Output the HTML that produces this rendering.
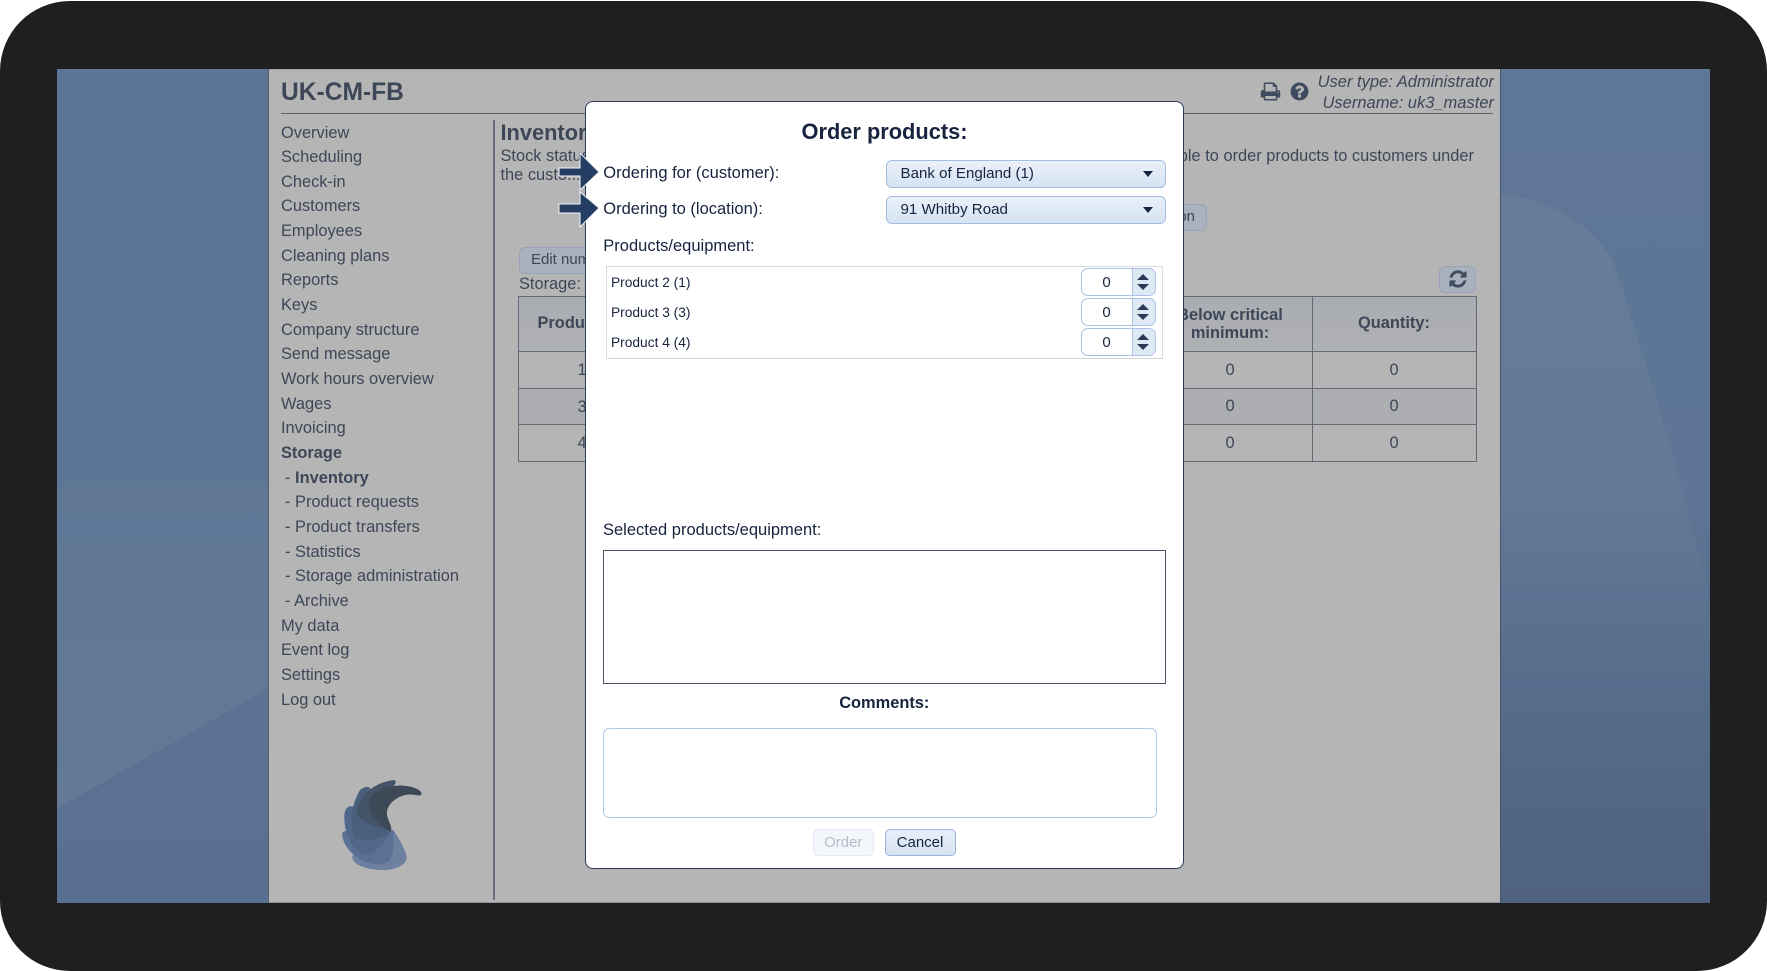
<!DOCTYPE html>
<html lang="en">
<head>
<meta charset="utf-8">
<title>Order products</title>
<style>
html,body{margin:0;padding:0;background:#fff;}
body{width:1767px;height:971px;overflow:hidden;position:relative;font-family:"Liberation Sans",sans-serif;}
div,span{box-sizing:border-box;}
.a{position:absolute;}
.t{position:absolute;white-space:nowrap;line-height:20px;height:20px;font-size:16.4px;color:#3d4757;}
.m{color:#17233f;font-size:16.5px;}
.c{transform:translateX(-50%);}
.b{font-weight:bold;}
.nav{position:absolute;left:281px;top:120.5px;font-size:16.4px;line-height:24.67px;color:#3d4757;white-space:nowrap;}
.nav div{height:24.67px;}
.nav .s{padding-left:4px;}
.sel{position:absolute;left:886px;width:279.5px;height:28px;border:1.5px solid #a3bde0;border-radius:6px;background:linear-gradient(#eaf1f9,#d5e3f3);font-size:15.1px;line-height:25px;padding-left:13.5px;color:#17233f;white-space:nowrap;}
.sel i{position:absolute;right:12px;top:10px;width:0;height:0;border-left:5.5px solid transparent;border-right:5.5px solid transparent;border-top:6px solid #17233f;}
.spin{position:absolute;left:1080.5px;width:75.5px;height:28px;border:1.5px solid #a9c1e3;border-radius:7px;background:#fff;overflow:hidden;}
.spin b{position:absolute;left:0;width:50px;top:1px;height:25px;text-align:center;font-weight:normal;font-size:15px;line-height:25px;color:#17233f;}
.spin u{position:absolute;left:50px;right:0;top:0;bottom:0;border-left:1.5px solid #a9c1e3;background:#dfe9f5;text-decoration:none;}
.spin u:before,.spin u:after{content:"";position:absolute;left:4.5px;border-left:6px solid transparent;border-right:6px solid transparent;}
.spin u:before{top:5px;border-bottom:6px solid #2a3a55;}
.spin u:after{top:15px;border-top:6px solid #2a3a55;}
.row{position:absolute;font-size:13.75px;line-height:16px;left:611px;color:#17233f;white-space:nowrap;}
.btn{position:absolute;background:#a9b1bd;border:1.5px solid #97a3b6;border-radius:6px;}
</style>
</head>
<body>
<!-- dark frame -->
<div class="a" style="left:0;top:1px;width:1767px;height:970px;background:#201f20;border-radius:70px;"></div>

<!-- blue wallpaper -->
<svg class="a" style="left:57px;top:69px;" width="1653" height="834" viewBox="57 69 1653 834">
  <defs>
    <linearGradient id="g1" gradientUnits="userSpaceOnUse" x1="0" y1="69" x2="0" y2="810">
      <stop offset="0" stop-color="#5e7695"/>
      <stop offset="0.5" stop-color="#5e7695"/>
      <stop offset="1" stop-color="#637997"/>
    </linearGradient>
    <linearGradient id="g1b" gradientUnits="userSpaceOnUse" x1="0" y1="690" x2="0" y2="903">
      <stop offset="0" stop-color="#5c7292"/>
      <stop offset="1" stop-color="#5a7090"/>
    </linearGradient>
    <linearGradient id="g2" gradientUnits="userSpaceOnUse" x1="0" y1="69" x2="0" y2="903">
      <stop offset="0" stop-color="#5f7796"/>
      <stop offset="0.5" stop-color="#5e7595"/>
      <stop offset="0.75" stop-color="#566c8b"/>
      <stop offset="1" stop-color="#4f627f"/>
    </linearGradient>
    <linearGradient id="g3" gradientUnits="userSpaceOnUse" x1="0" y1="193" x2="0" y2="700">
      <stop offset="0" stop-color="#fff" stop-opacity="0.045"/>
      <stop offset="0.6" stop-color="#fff" stop-opacity="0.03"/>
      <stop offset="1" stop-color="#fff" stop-opacity="0"/>
    </linearGradient>
  </defs>
  <rect x="57" y="69" width="300" height="834" fill="url(#g1)"/>
  <path d="M57 808L269 687L269 903L57 903Z" fill="url(#g1b)"/>
  <path d="M57 808L269 687" stroke="#667d9b" stroke-width="1" opacity=".7" fill="none"/>
  <rect x="1480" y="69" width="230" height="834" fill="url(#g2)"/>
  <path d="M1480 193C1560 195 1605 235 1618 275C1640 345 1680 470 1710 600L1710 700L1480 700Z" fill="url(#g3)"/>
</svg>

<!-- grey panel -->
<div class="a" style="left:268px;top:69px;width:1233px;height:834px;background:#b5b5b5;border-left:1px solid #525d70;border-right:1.5px solid #46556e;"></div>
<div class="a" style="left:269px;top:69px;width:1231px;height:1px;background:#a0a2a6;"></div>
<div class="a" style="left:269px;top:902px;width:1231px;height:1px;background:#8f9298;"></div>

<!-- header -->
<div class="t b" style="left:281px;top:80.5px;font-size:24.6px;line-height:24px;height:24px;">UK-CM-FB</div>
<div class="a" style="left:281px;top:113px;width:1212px;height:1px;background:#5a6170;"></div>
<svg class="a" style="left:1260px;top:81px;" width="21" height="21" viewBox="0 0 1792 1792"><path fill="#3f4c60" d="M448 1536h896v-256h-896v256zm0-640h896v-384h-160q-40 0-68-28t-28-68v-160h-640v640zm1152 64q0-26-19-45t-45-19-45 19-19 45 19 45 45 19 45-19 19-45zm128 0v416q0 13-9.5 22.5t-22.5 9.5h-224v160q0 40-28 68t-68 28h-960q-40 0-68-28t-28-68v-160h-224q-13 0-22.5-9.5t-9.5-22.5v-416q0-79 56.5-135.5t135.5-56.5h64v-544q0-40 28-68t68-28h672q40 0 88 20t76 48l152 152q28 28 48 76t20 88v256h64q79 0 135.5 56.5t56.5 135.5z"/></svg>
<svg class="a" style="left:1289px;top:81px;" width="21" height="21" viewBox="0 0 1792 1792"><path fill="#3f4c60" d="M1024 1376v-192q0-14-9-23t-23-9h-192q-14 0-23 9t-9 23v192q0 14 9 23t23 9h192q14 0 23-9t9-23zm256-672q0-88-55.5-163t-138.5-116-170-41q-243 0-371 213-15 24 8 42l132 100q7 6 19 6 16 0 25-12 53-68 86-92 34-24 86-24 48 0 85.5 26t37.5 59q0 38-20 61t-68 45q-63 28-115.5 86.5t-52.5 125.5v36q0 14 9 23t23 9h192q14 0 23-9t9-23q0-19 21.5-49.5t54.5-49.5q32-18 49-28.5t46-35 44.5-48 28-60.5 12.5-81zm384 192q0 209-103 385.5t-279.5 279.5-385.5 103-385.5-103-279.5-279.5-103-385.5 103-385.5 279.5-279.5 385.5-103 385.5 103 279.5 279.5 103 385.5z"/></svg>
<div class="t" style="right:273px;top:72px;font-style:italic;font-size:16.5px;">User type: Administrator</div>
<div class="t" style="right:273px;top:93px;font-style:italic;font-size:16.5px;">Username: uk3_master</div>

<!-- nav -->
<div class="nav">
<div>Overview</div><div>Scheduling</div><div>Check-in</div><div>Customers</div><div>Employees</div><div>Cleaning plans</div><div>Reports</div><div>Keys</div><div>Company structure</div><div>Send message</div><div>Work hours overview</div><div>Wages</div><div>Invoicing</div><div class="b">Storage</div>
<div class="s">- <span class="b">Inventory</span></div><div class="s">- Product requests</div><div class="s">- Product transfers</div><div class="s">- Statistics</div><div class="s">- Storage administration</div><div class="s">- Archive</div>
<div>My data</div><div>Event log</div><div>Settings</div><div>Log out</div>
</div>

<!-- logo -->
<svg class="a" style="left:260px;top:700px;" width="300" height="271" viewBox="0 0 900 813">
  <path fill="#6d80a0" d="M400 390C420 420 442 460 440 475C435 500 395 512 360 510C320 508 280 495 276 472C290 440 340 410 400 390Z"/>
  <path fill="#5a7094" d="M400 392C402 430 402 470 385 485C360 500 320 490 295 475C265 455 245 425 247 398C260 385 340 380 400 392Z"/>
  <path fill="#52688a" d="M395 392C370 430 345 465 320 465C280 460 250 400 253 345C255 320 270 315 277 320C320 330 370 360 395 392Z"/>
  <path fill="#4a5f7b" d="M395 392C360 420 310 430 285 410C268 380 270 320 300 270C315 258 330 258 332 268C350 310 380 360 395 392Z"/>
  <path fill="#445468" d="M395 392C350 380 300 370 290 340C290 300 330 250 400 240C412 242 408 250 400 258C360 280 350 340 395 392Z"/>
  <path fill="#3d4957" d="M390 395C360 375 325 340 325 310C330 275 390 250 440 258C470 262 490 275 483 285C475 290 460 280 435 285C400 295 375 320 382 350C388 370 400 385 390 395Z"/>
</svg>

<!-- divider -->
<div class="a" style="left:493px;top:120px;width:2px;height:780px;background:#6a7080;"></div>

<!-- content -->
<div class="t b" style="left:500.5px;top:122.5px;font-size:21.8px;">Inventory</div>
<div class="t" style="left:500.5px;top:145.5px;">Stock status</div>
<div class="t" style="left:500.5px;top:164.5px;">the custo...</div>
<div class="t" style="right:293px;top:145.5px;">able to order products to customers under</div>

<div class="btn" style="left:519px;top:246.5px;width:120px;height:27px;"></div>
<div class="t" style="left:531px;top:249.5px;font-size:15px;">Edit number</div>
<div class="btn" style="left:1120px;top:203.5px;width:87px;height:27px;"></div>
<div class="t" style="right:572px;top:207px;font-size:15px;">on</div>
<div class="t" style="left:519px;top:274px;">Storage:</div>

<div class="btn" style="left:1439px;top:265.5px;width:36.5px;height:27px;"></div>
<svg class="a" style="left:1447.5px;top:268.5px;" width="20" height="20" viewBox="0 0 1792 1792"><path fill="#3f4c60" d="M1639 1056q0 5-1 7-64 268-268 434.5t-478 166.5q-146 0-282.5-55t-243.5-157l-129 129q-19 19-45 19t-45-19-19-45v-448q0-26 19-45t45-19h448q26 0 45 19t19 45-19 45l-137 137q71 66 161 102t187 36q134 0 250-65t186-179q11-17 53-117 8-23 30-23h192q13 0 22.5 9.5t9.5 22.5zm25-800v448q0 26-19 45t-45 19h-448q-26 0-45-19t-19-45 19-45l138-138q-148-137-349-137-134 0-250 65t-186 179q-11 17-53 117-8 23-30 23h-199q-13 0-22.5-9.5t-9.5-22.5v-7q65-268 270-434.5t480-166.5q146 0 284 55.5t245 156.5l130-129q19-19 45-19t45 19 19 45z"/></svg>

<!-- table -->
<div class="a" style="left:517.5px;top:296px;width:959.5px;height:56px;background:linear-gradient(#a9acb2,#afb0b3);"></div>
<div class="a" style="left:517.5px;top:388px;width:959.5px;height:37px;background:#adaeb2;"></div>
<div class="a" style="left:517.5px;top:296px;width:959.5px;height:166px;border:1px solid #646a78;border-top-width:1.5px;"></div>
<div class="a" style="left:517.5px;top:351px;width:959.5px;height:1px;background:#646a78;"></div>
<div class="a" style="left:517.5px;top:388px;width:959.5px;height:1px;background:#646a78;"></div>
<div class="a" style="left:517.5px;top:424px;width:959.5px;height:1px;background:#646a78;"></div>
<div class="a" style="left:1311.5px;top:296px;width:1px;height:166px;background:#646a78;"></div>
<div class="t b" style="left:537.5px;top:312.5px;">Product:</div>
<div class="t c" style="left:582px;top:360px;">1</div><div class="t c" style="left:582px;top:396.5px;">3</div><div class="t c" style="left:582px;top:433px;">4</div>
<div class="t b c" style="left:1230px;top:304.5px;">Below critical</div>
<div class="t b c" style="left:1230px;top:323px;">minimum:</div>
<div class="t b c" style="left:1394px;top:313px;">Quantity:</div>
<div class="t c" style="left:1230px;top:360px;">0</div><div class="t c" style="left:1394px;top:360px;">0</div>
<div class="t c" style="left:1230px;top:396px;">0</div><div class="t c" style="left:1394px;top:396px;">0</div>
<div class="t c" style="left:1230px;top:432.5px;">0</div><div class="t c" style="left:1394px;top:432.5px;">0</div>

<!-- modal -->
<div class="a" style="left:585px;top:101px;width:599px;height:767.5px;background:#fff;border:1px solid #2c3c59;border-top-width:1.5px;border-radius:8px;"></div>

<!-- arrows -->
<svg class="a" style="left:550px;top:145px;" width="60" height="90" viewBox="550 145 60 90">
  <path d="M559 168H580V153L599 172L580 190V176H559Z" fill="#243d62" stroke="#f2f4f8" stroke-width="1"/>
  <path d="M559 204H580V192L599 208L580 227V213H559Z" fill="#243d62" stroke="#f2f4f8" stroke-width="1"/>
</svg>

<div class="t b m c" style="left:884.5px;top:122px;font-size:21.8px;">Order products:</div>
<div class="t m" style="left:603.3px;top:163px;">Ordering for (customer):</div>
<div class="t m" style="left:603.3px;top:199px;">Ordering to (location):</div>
<div class="t m" style="left:603.3px;top:236px;">Products/equipment:</div>

<div class="sel" style="top:159.5px;">Bank of England (1)<i></i></div>
<div class="sel" style="top:196px;">91 Whitby Road<i></i></div>

<div class="a" style="left:605.5px;top:266px;width:557px;height:92.5px;border:1px solid #dcdcdc;border-bottom:1.5px solid #d2d2d2;"></div>
<div class="row" style="top:274.5px;">Product 2 (1)</div>
<div class="row" style="top:304.5px;">Product 3 (3)</div>
<div class="row" style="top:334.5px;">Product 4 (4)</div>
<div class="spin" style="top:268px;"><b>0</b><u></u></div>
<div class="spin" style="top:298px;"><b>0</b><u></u></div>
<div class="spin" style="top:328px;"><b>0</b><u></u></div>

<div class="t m" style="left:603px;top:520px;">Selected products/equipment:</div>
<div class="a" style="left:603px;top:550px;width:562.5px;height:133.5px;border:1.5px solid #4a5568;background:#fff;"></div>
<div class="t b m c" style="left:884.3px;top:692.5px;font-size:16.4px;">Comments:</div>
<div class="a" style="left:603px;top:727.5px;width:554px;height:90.5px;border:1.5px solid #b4c7e6;border-radius:6px;background:#fff;"></div>

<div class="a" style="left:812.5px;top:829px;width:61.5px;height:27px;background:#f3f6fb;border:1.5px solid #e3eaf5;border-radius:5px;text-align:center;font-size:15px;line-height:25.5px;color:#b7bcc6;">Order</div>
<div class="a" style="left:884.5px;top:829px;width:71px;height:27px;background:linear-gradient(#e6eef8,#d8e4f3);border:1.5px solid #99b4da;border-radius:5px;text-align:center;font-size:15px;line-height:25.5px;color:#17233f;">Cancel</div>
</body>
</html>
